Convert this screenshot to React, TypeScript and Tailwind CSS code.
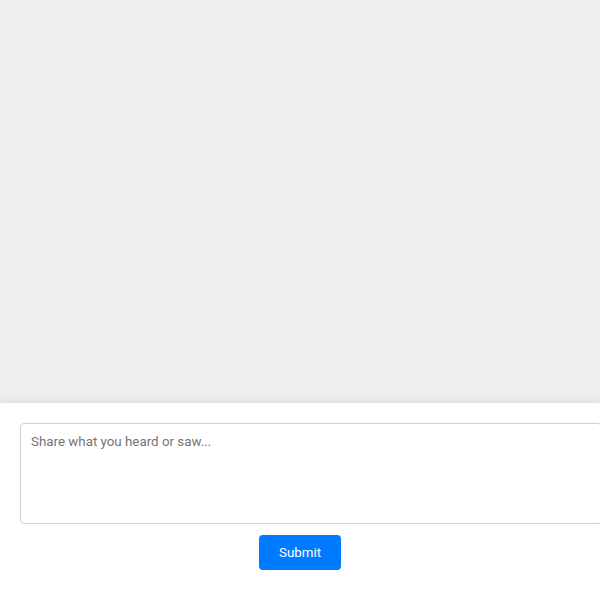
export default function App() {
  return (
    <div
      className="flex h-[600px] w-[600px] flex-col overflow-hidden bg-[#efefef]"
      style={{ fontFamily: 'Roboto, "Liberation Sans", sans-serif' }}
    >
      {/* Feed area */}
      <div className="flex-1" />

      {/* Composer */}
      <div className="relative h-[197px] bg-white px-5 pt-5 shadow-[0_-2px_8px_rgba(0,0,0,0.08)]">
        <textarea
          placeholder="Share what you heard or saw..."
          className="box-content block h-[79px] w-full resize-none rounded border border-[#d0d0d0] px-[10px] py-[10px] text-[13.333px] leading-[16px] text-[#333] placeholder:text-[#757575] outline-none"
        />
        <div className="mt-[11px] flex justify-center">
          <button className="h-[35px] w-[82px] rounded bg-[#007bff] text-[13.333px] text-white">
            Submit
          </button>
        </div>
      </div>
    </div>
  );
}
